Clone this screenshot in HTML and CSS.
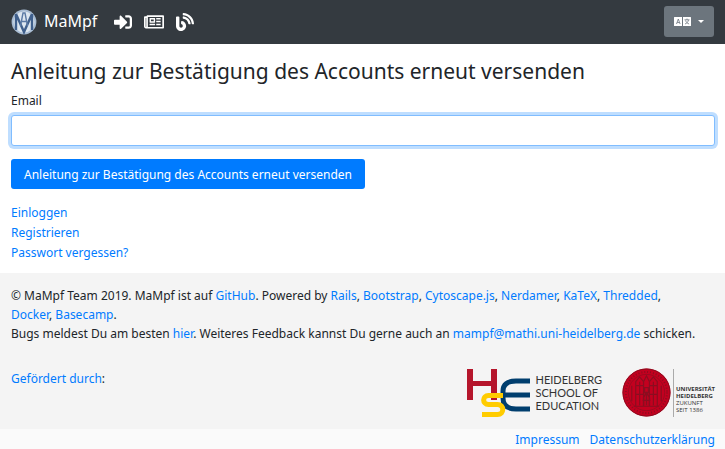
FILE: index.html
```html
<!DOCTYPE html>
<html lang="de">
<head>
<meta charset="utf-8">
<title>MaMpf</title>
<link rel="stylesheet" href="styles.css">
</head>
<body>
<nav class="navbar">
  <a class="brand" href="#">
    <svg class="brand-logo" viewBox="0 0 26 26" aria-hidden="true">
      <circle cx="13" cy="13" r="12.400" fill="#a9bdd4"/>
      <circle cx="13" cy="13" r="10.500" fill="#dce6f0"/>
      <path d="M5 5v16M21 5v16M5 5l8 18 8-18" fill="none" stroke="#3f5f8c" stroke-width="2.400"/>
      <path d="M9.500 17L12 4h2l2.500 13M10 12.500h6" fill="none" stroke="#5b7aa5" stroke-width="1.400"/>
    </svg>
    <span>MaMpf</span>
  </a>
  <a class="nav-icon" href="#" aria-label="Einloggen">
    <svg viewBox="0 0 512 512"><path d="M416 448h-84c-6.600 0-12-5.400-12-12v-40c0-6.600 5.400-12 12-12h84c17.700 0 32-14.300 32-32V160c0-17.700-14.300-32-32-32h-84c-6.600 0-12-5.400-12-12V76c0-6.600 5.400-12 12-12h84c53 0 96 43 96 96v192c0 53-43 96-96 96zm-47-201L201 79c-15-15-41-4.500-41 17v96H24c-13.300 0-24 10.700-24 24v96c0 13.300 10.700 24 24 24h136v96c0 21.500 26 32 41 17l168-168c9.300-9.400 9.300-24.600 0-34z"/></svg>
  </a>
  <a class="nav-icon nav-icon-wide" href="#" aria-label="Neuigkeiten">
    <svg viewBox="0 0 576 512"><path fill-rule="evenodd" d="M552 64H112c-20.900 0-38.700 13.400-45.300 32H24c-13.300 0-24 10.700-24 24v272c0 30.900 25.100 56 56 56h496c13.300 0 24-10.700 24-24V88c0-13.300-10.700-24-24-24zM48 392V144h16v248c0 4.400-3.600 8-8 8s-8-3.600-8-8zm480 8H111.400c.4-2.600.6-5.300.6-8V112h416zM172 280h136c6.600 0 12-5.400 12-12V156c0-6.600-5.400-12-12-12H172c-6.600 0-12 5.400-12 12v112c0 6.600 5.400 12 12 12zm28-96h80v56h-80zM160 308h160v44H160zM352 144h128v44H352zM352 226h128v44H352zM352 308h128v44H352z"/></svg>
  </a>
  <a class="nav-icon" href="#" aria-label="Blog">
    <svg viewBox="0 0 512 512"><path d="M172.200 226.800c-14.600-2.900-28.200 8.900-28.200 23.800V301c0 10.200 7.100 18.400 16.700 22 18.200 6.800 31.300 24.400 31.300 45 0 26.500-21.500 48-48 48s-48-21.500-48-48V120c0-13.300-10.700-24-24-24H24c-13.300 0-24 10.700-24 24v248c0 89.500 82.100 160.200 175 140.700 54.400-11.400 98.300-55.400 109.700-109.700 17.400-82.900-37-157.200-112.500-172.200zM209 0c-9.200-.5-17 6.800-17 16v31.600c0 8.500 6.600 15.500 15 15.900 129.400 7 233.400 112 240.900 241.500.5 8.400 7.500 15 15.900 15h32.100c9.200 0 16.500-7.800 16-17C503.400 139.800 372.200 8.600 209 0zm.3 96c-9.300-.7-17.300 6.700-17.300 16.100v32.100c0 8.400 6.500 15.300 14.800 15.900 76.800 6.300 138 68.200 144.900 145.200.8 8.300 7.600 14.700 15.900 14.700h32.200c9.300 0 16.800-8 16.100-17.300-8.400-110.100-96.500-198.200-206.600-206.700z"/></svg>
  </a>
  <button class="language" type="button" aria-label="Sprache" aria-haspopup="true">
    <svg class="language-icon" viewBox="0 0 17 9" aria-hidden="true">
      <path d="M.5 0H8v9H.5a.5.5 0 0 1-.5-.5v-8a.5.5 0 0 1 .5-.5zM9 0h7.500a.5.5 0 0 1 .5.5v8a.5.5 0 0 1-.5.5H9z" fill="#fff"/>
      <path d="M2.500 7l1.800-5 1.800 5M3.200 5.500h2.200M10.500 2.800h5M13 1.600v1.200M14.500 3c-.4 2-1.800 3.300-3.500 4M11.500 3.500c.7 1.700 1.800 2.800 3.600 3.500" fill="none" stroke="#6c757d" stroke-width=".8"/>
    </svg>
    <span class="caret"></span>
  </button>
</nav>

<main class="content">
  <h1>Anleitung zur Bestätigung des Accounts erneut versenden</h1>
  <form>
    <label for="email">Email</label>
    <input class="field" id="email" type="email">
    <button class="submit" type="button">Anleitung zur Bestätigung des Accounts erneut versenden</button>
  </form>
  <ul class="links">
    <li><a href="#">Einloggen</a></li>
    <li><a href="#">Registrieren</a></li>
    <li><a href="#">Passwort vergessen?</a></li>
  </ul>
</main>

<footer>
  <div class="about">
    <p>© MaMpf Team 2019. MaMpf ist auf <a href="#">GitHub</a>. Powered by <a href="#">Rails</a>, <a href="#">Bootstrap</a>, <a href="#">Cytoscape.js</a>, <a href="#">Nerdamer</a>, <a href="#">KaTeX</a>, <a href="#">Thredded</a>,<br><a href="#">Docker</a>, <a href="#">Basecamp</a>.</p>
    <p>Bugs meldest Du am besten <a href="#">hier</a>. Weiteres Feedback kannst Du gerne auch an <a href="#">mampf@mathi.uni-heidelberg.de</a> schicken.</p>
    <div class="sponsors">
      <p><a href="#">Gefördert durch</a>:</p>
      <a class="sponsor hse" href="#">
        <svg class="hse-mark" viewBox="0 0 64 48" aria-hidden="true">
          <path d="M0 0h6v12h18V0h6v31h-6V17H6v14H0z" fill="#b5152b"/>
          <path d="M63 12H49c-9 0-13 4-13 10v7c0 7 4 11 13 11h14M36 26h27" fill="none" stroke="#003e6e" stroke-width="5"/>
          <path d="M36 26.500H21.500c-6.500 0-6.500 9 0 9h9c7 0 7 10 0 10H15" fill="none" stroke="#fc0" stroke-width="5"/>
        </svg>
        <span class="hse-name"><span>HEIDELBERG</span><span>SCHOOL OF</span><span>EDUCATION</span></span>
      </a>
      <a class="sponsor uni" href="#">
        <svg class="uni-seal" viewBox="0 0 50 50" aria-hidden="true">
          <circle cx="25" cy="25" r="24.500" fill="#c3001f"/>
          <g fill="none" stroke="#8b0d20">
            <circle cx="25" cy="25" r="24" stroke-width="1"/>
            <circle cx="25" cy="25" r="21" stroke-width="2" stroke-dasharray="1 2"/>
            <circle cx="25" cy="25" r="18.500" stroke-width=".7"/>
            <path d="M14 39V14l4-5 4 5v25M28 39V14l4-5 4 5v25M22 14l3-6 3 6M12 39h26M10 18v16M40 18v16M14 18h8M28 18h8M14 27h8M28 27h8M18 14v24M32 14v24" stroke-width="1.200"/>
            <path d="M22 38v-8l3-5 3 5v8M23 20h4v5h-4zM21 33h8M25 26v12" stroke-width="1.400"/>
          </g>
        </svg>
        <span class="uni-name"><b>UNIVERSITÄT<br>HEIDELBERG</b><br>ZUKUNFT<br>SEIT 1386</span>
      </a>
    </div>
  </div>
  <div class="legal">
    <a href="#">Impressum</a>
    <a href="#">Datenschutzerklärung</a>
  </div>
</footer>
</body>
</html>
```
FILE: styles.css
```css
* {
  box-sizing: border-box;
}

body {
  margin: 0;
  background: #fff;
  color: #212529;
  font: 12px/19px "Noto Sans", "Liberation Sans", sans-serif;
}

p {
  margin: 0;
}

a {
  color: #007bff;
  text-decoration: none;
}

button,
input {
  font: inherit;
}

.navbar {
  display: flex;
  align-items: center;
  padding: 6px 11px 7px;
  background: #343a40;
}

.brand {
  display: flex;
  align-items: center;
  gap: 7px;
  margin-right: 17px;
  color: #fff;
  font-size: 16px;
}

.brand-logo {
  width: 26px;
  height: 26px;
}

.nav-icon {
  display: flex;
  width: 18px;
  margin-right: 12px;
}

.nav-icon-wide {
  width: 20px;
}

.nav-icon svg {
  width: 100%;
  fill: #fff;
}

.language {
  display: flex;
  align-items: center;
  justify-content: center;
  gap: 7px;
  width: 50px;
  height: 31px;
  margin-left: auto;
  padding: 0;
  border: 0;
  border-radius: 3px;
  background: #6c757d;
}

.language-icon {
  width: 17px;
  height: 9px;
}

.caret {
  border: 3px solid transparent;
  border-top-color: #fff;
  border-bottom: 0;
}

.content {
  padding: 12px 10px 11px 11px;
}

h1 {
  margin: 0 0 5px;
  font-size: 21px;
  font-weight: 400;
  line-height: 30px;
}

label {
  display: block;
  margin-bottom: 5px;
}

.field {
  display: block;
  width: 100%;
  height: 31px;
  padding: 4px 10px;
  border: 1px solid #80bdff;
  border-radius: 3px;
  outline: 0;
  box-shadow: 0 0 0 3px #bfdeff;
}

.submit {
  display: block;
  margin: 13px 0 14px;
  padding: 6px 13px 5px;
  border: 0;
  border-radius: 3px;
  background: #007bff;
  color: #fff;
}

.links {
  margin: 0;
  padding: 0;
  line-height: 20px;
  list-style: none;
}

.about {
  padding: 13px 10px 12px 11px;
  background: #f4f4f4;
}

.content {
  padding-bottom: 10px;
}

.sponsors {
  display: flex;
  align-items: center;
  gap: 20px;
  margin-top: 25px;
}

.sponsors p {
  margin: 0 auto 28px 0;
}

.sponsor {
  display: flex;
  align-items: center;
  color: #333;
}

.hse {
  gap: 4px;
  font: 11px/13px Lato, "Noto Sans", sans-serif;
}

.hse-name span {
  display: block;
}

.hse-mark {
  width: 64px;
  height: 48px;
}

.uni {
  gap: 2px;
  font: 6px/7px "Open Sans", "Noto Sans", sans-serif;
}

.uni-name {
  padding: 17px 0 3px 2px;
  border-left: 1px solid #aaa;
}

.uni-seal {
  width: 49px;
  height: 49px;
}

.legal {
  display: flex;
  justify-content: flex-end;
  gap: 10px;
  padding: 2px 10px 0;
  background: #fafafa;
  line-height: 18px;
}
```
